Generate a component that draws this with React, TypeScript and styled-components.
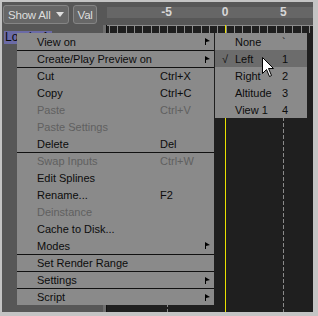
import styled, { createGlobalStyle } from "styled-components";

const GlobalStyle = createGlobalStyle`
    html, body {
        margin: 0;
        padding: 0;
        background: #575757;
        font-family: "Liberation Sans", Arial, sans-serif;
    }
    * {
        box-sizing: border-box;
    }
`;

type Item = {
    label: string;
    shortcut?: string;
    sub?: boolean;
    disabled?: boolean;
    sep?: boolean;
};

const menuItems: Item[] = [
    { label: "View on", sub: true },
    { label: "Create/Play Preview on", sub: true, sep: true },
    { label: "Cut", shortcut: "Ctrl+X", sep: true },
    { label: "Copy", shortcut: "Ctrl+C" },
    { label: "Paste", shortcut: "Ctrl+V", disabled: true },
    { label: "Paste Settings", disabled: true },
    { label: "Delete", shortcut: "Del" },
    { label: "Swap Inputs", shortcut: "Ctrl+W", disabled: true, sep: true },
    { label: "Edit Splines" },
    { label: "Rename...", shortcut: "F2" },
    { label: "Deinstance", disabled: true },
    { label: "Cache to Disk..." },
    { label: "Modes", sub: true },
    { label: "Set Render Range", sep: true },
    { label: "Settings", sub: true, sep: true },
    { label: "Script", sub: true, sep: true },
];

const viewItems = [
    { label: "None", key: "`" },
    { label: "Left", key: "1", checked: true },
    { label: "Right", key: "2" },
    { label: "Altitude", key: "3" },
    { label: "View 1", key: "4" },
];

const scale = [-5, 0, 5];
// x of value 0 and pixels per unit, relative to the timeline panel
const ZERO_X = 118;
const UNIT = 11.67;

const Frame = styled.div`
    position: relative;
    width: 318px;
    height: 316px;
    border-style: solid;
    border-color: #c4c4c4;
    border-width: 2px 5px 4px 2px;
    background: #575757;
    display: flex;
    flex-direction: column;
    overflow: hidden;
`;

const TopBar = styled.div`
    height: 23px;
    display: flex;
    align-items: flex-start;
`;

const Tools = styled.div`
    width: 105px;
    display: flex;
    gap: 4px;
    padding: 3px 0 0 1px;
`;

const ToolButton = styled.div`
    height: 19px;
    padding: 0 3px 0 4px;
    display: flex;
    align-items: center;
    gap: 5px;
    background: #676767;
    border: 1px solid #858585;
    border-radius: 3px;
    color: #dedede;
    font-size: 11.5px;
    letter-spacing: -0.2px;
`;

const DownArrow = styled.span`
    width: 0;
    height: 0;
    border-left: 4px solid transparent;
    border-right: 4px solid transparent;
    border-top: 5px solid #dedede;
    margin-right: 1px;
`;

const RulerHead = styled.div`
    position: relative;
    flex: 1;
    height: 11px;
    margin-top: 5px;
    background: #666666;
`;

const ScaleLabel = styled.span`
    position: absolute;
    top: -2px;
    transform: translateX(-50%);
    color: #d6d6d6;
    font-size: 12px;
    font-weight: bold;
    line-height: 14px;
`;

const Body = styled.div`
    flex: 1;
    display: flex;
`;

const NodeList = styled.div`
    width: 101px;
    padding: 2px 2px;
`;

const NodeLabel = styled.div`
    display: inline-block;
    height: 13px;
    padding: 0 3px 0 1px;
    background: #6b6ba6;
    color: #0a0a0a;
    font-size: 12px;
    line-height: 13px;
`;

const Splitter = styled.div`
    width: 4px;
    background: #6e6e6e;
    border-right: 1px solid #101010;
`;

const Timeline = styled.div`
    position: relative;
    flex: 1;
    background: #1f1f1f;
`;

const Ticks = styled.div`
    height: 8px;
    border-top: 1px solid #8c8c8c;
    background: repeating-linear-gradient(
        to right,
        #8c8c8c 0 1px,
        transparent 1px 8.33px
    );
    background-position: 2px 0;
`;

const CurrentTime = styled.div`
    position: absolute;
    top: 0;
    bottom: 0;
    width: 1px;
    background: #e8e000;
`;

const GridLine = styled.div`
    position: absolute;
    top: 8px;
    bottom: 0;
    width: 1px;
    background: repeating-linear-gradient(
        to bottom,
        #8a8a8a 0 4px,
        transparent 4px 6px
    );
`;

const Menu = styled.div<{ $left: number; $width: number }>`
    position: absolute;
    top: 33px;
    left: ${({ $left }) => $left}px;
    width: ${({ $width }) => $width}px;
    background: #8a8a8a;
    font-size: 11px;
    color: #0c0c0c;
`;

const Row = styled.div<{ $sep?: boolean; $disabled?: boolean; $active?: boolean }>`
    position: relative;
    height: 17px;
    display: flex;
    align-items: center;
    border-top: ${({ $sep }) => ($sep ? "1px solid #111" : "none")};
    background: ${({ $active }) => ($active ? "#6c6c6c" : "transparent")};
    color: ${({ $disabled }) => ($disabled ? "#606060" : "#0c0c0c")};
    white-space: nowrap;
`;

const Label = styled.span<{ $indent: number; $width: number }>`
    padding-left: ${({ $indent }) => $indent}px;
    width: ${({ $width }) => $width}px;
    flex: none;
`;

const Shortcut = styled.span`
    flex: 1;
`;

const SubArrow = styled.svg`
    width: 5px;
    height: 7px;
    margin-right: 4px;
`;

const Check = styled.span`
    position: absolute;
    left: 7px;
    font-size: 11px;
`;

const Cursor = styled.svg`
    position: absolute;
    left: 262px;
    top: 57px;
    width: 13px;
    height: 21px;
`;

const App = () => {
    return (
        <>
            <GlobalStyle />
            <Frame>
                <TopBar>
                    <Tools>
                        <ToolButton>
                            Show All
                            <DownArrow />
                        </ToolButton>
                        <ToolButton>Val</ToolButton>
                    </Tools>
                    <RulerHead>
                        {scale.map((v) => (
                            <ScaleLabel key={v} style={{ left: ZERO_X + v * UNIT }}>
                                {v}
                            </ScaleLabel>
                        ))}
                    </RulerHead>
                </TopBar>
                <Body>
                    <NodeList>
                        <NodeLabel>Loader1</NodeLabel>
                    </NodeList>
                    <Splitter />
                    <Timeline>
                        <Ticks />
                        {scale
                            .filter((v) => v !== 0)
                            .map((v) => (
                                <GridLine key={v} style={{ left: ZERO_X + v * UNIT }} />
                            ))}
                        <CurrentTime style={{ left: ZERO_X }} />
                    </Timeline>
                </Body>
            </Frame>

            <Menu $left={17} $width={197}>
                {menuItems.map((item) => (
                    <Row key={item.label} $sep={item.sep} $disabled={item.disabled}>
                        <Label $indent={20} $width={143}>
                            {item.label}
                        </Label>
                        <Shortcut>{item.shortcut}</Shortcut>
                        {item.sub && (
                            <SubArrow viewBox="0 0 5 7">
                                <path d="M0 0 L5 3 L1 4 L1 7 L0 7 Z" fill="#000" />
                            </SubArrow>
                        )}
                    </Row>
                ))}
            </Menu>

            <Menu $left={215} $width={92}>
                {viewItems.map((item) => (
                    <Row key={item.label} $active={item.checked}>
                        {item.checked && <Check>√</Check>}
                        <Label $indent={20} $width={67}>
                            {item.label}
                        </Label>
                        <Shortcut>{item.key}</Shortcut>
                    </Row>
                ))}
            </Menu>

            <Cursor viewBox="0 0 13 21">
                <path
                    d="M0.5 0.5 L0.5 16.5 L4.5 12.5 L7.5 19.5 L9.5 18.5 L6.5 11.5 L11.5 11.5 Z"
                    fill="#fff"
                    stroke="#000"
                    strokeWidth="1"
                />
            </Cursor>
        </>
    );
};

export default App;
